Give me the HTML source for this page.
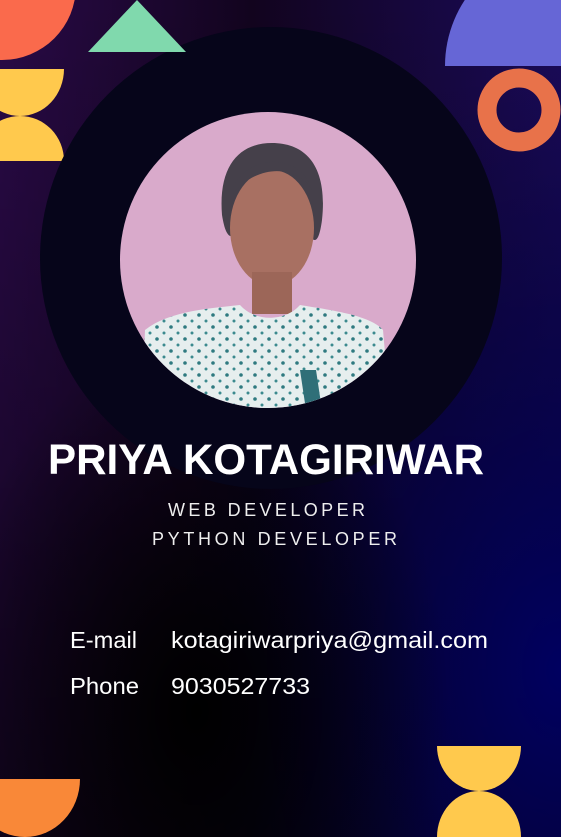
<!DOCTYPE html>
<html><head><meta charset="utf-8"><style>
html,body{margin:0;padding:0}
body{width:561px;height:837px;overflow:hidden;position:relative;font-family:"Liberation Sans",Arial,sans-serif;
background:#05001a;}
svg{position:absolute;left:0;top:0}
</style></head><body>
<svg width="561" height="837" viewBox="0 0 561 837">
<defs>
<linearGradient id="bg" x1="0" y1="0" x2="1" y2="0">
<stop offset="0" stop-color="#2a0a48"/><stop offset="0.45" stop-color="#12041e"/><stop offset="1" stop-color="#1a0a5a"/>
</linearGradient>
<linearGradient id="bg2" x1="0" y1="0" x2="0" y2="1">
<stop offset="0" stop-color="#000" stop-opacity="0"/><stop offset="0.5" stop-color="#000" stop-opacity="0.3"/><stop offset="1" stop-color="#000" stop-opacity="0.6"/>
</linearGradient>
<radialGradient id="br" cx="1" cy="0.8" r="0.7">
<stop offset="0" stop-color="#000060"/><stop offset="1" stop-color="#000040" stop-opacity="0"/>
</radialGradient>
<radialGradient id="bc" cx="0.35" cy="0.85" r="0.45">
<stop offset="0" stop-color="#000"/><stop offset="1" stop-color="#000" stop-opacity="0"/>
</radialGradient>
<clipPath id="pc"><circle cx="268" cy="260" r="148"/></clipPath>
<clipPath id="top66"><rect x="0" y="0" width="561" height="66"/></clipPath>
<pattern id="dots" width="14" height="12" patternUnits="userSpaceOnUse">
<rect width="14" height="12" fill="#e6eeee"/>
<circle cx="3" cy="3" r="1.8" fill="#2f7a80"/><circle cx="10" cy="9" r="1.5" fill="#3b8a8e"/>
</pattern>
</defs>
<rect width="561" height="837" fill="url(#bg)"/>
<rect width="561" height="837" fill="url(#bg2)"/>
<rect width="561" height="837" fill="url(#br)"/>
<rect width="561" height="837" fill="url(#bc)"/>
<circle cx="2" cy="-14" r="74" fill="#fa6a4c"/>
<path d="M-24,69 H64 A44,47 0 0 1 20,116 A44,47 0 0 1 -24,69Z" fill="#ffc94d"/>
<path d="M-24,161 H64 A44,45 0 0 0 20,116 A44,45 0 0 0 -24,161Z" fill="#ffc94d"/>
<circle cx="565" cy="66" r="120" fill="#6666d6" clip-path="url(#top66)"/>
<circle cx="519" cy="110" r="32" fill="none" stroke="#e8724a" stroke-width="19"/>
<circle cx="271" cy="258" r="231" fill="#06051a"/>
<polygon points="137,0 88,52 186,52" fill="#80d9ad"/>
<circle cx="268" cy="260" r="148" fill="#d9aacb"/>
<g clip-path="url(#pc)">
<path d="M222,215 C218,165 240,143 272,143 C305,143 328,165 322,220 C318,250 312,240 305,230 L240,230 C232,240 226,240 222,215Z" fill="#45404a"/>
<ellipse cx="272" cy="228" rx="42" ry="58" fill="#a87062"/>
<path d="M232,190 C245,155 300,150 312,190 C300,168 260,160 232,195Z" fill="#45404a"/>
<rect x="252" y="272" width="40" height="42" fill="#9c6658"/>
<path d="M142,410 L145,330 C170,310 215,308 240,305 C255,322 285,322 300,305 C330,310 370,315 383,330 L390,410Z" fill="url(#dots)"/>
<path d="M300,370 L306,410 L322,410 L316,370Z" fill="#2f6f78"/>
</g>
</svg>
<svg width="561" height="837" viewBox="0 0 561 837" style="z-index:2">
<text x="48" y="474" textLength="436" lengthAdjust="spacingAndGlyphs" font-family="Liberation Sans" font-weight="bold" font-size="43" fill="#fff">PRIYA KOTAGIRIWAR</text>
<text x="168" y="516" textLength="197" lengthAdjust="spacing" font-family="Liberation Sans" font-size="18" fill="#eee">WEB DEVELOPER</text>
<text x="152" y="545" textLength="245" lengthAdjust="spacing" font-family="Liberation Sans" font-size="18" fill="#eee">PYTHON DEVELOPER</text>
<text x="70" y="648" textLength="67" lengthAdjust="spacingAndGlyphs" font-family="Liberation Sans" font-size="23" fill="#fff">E-mail</text>
<text x="171" y="648" textLength="317" lengthAdjust="spacingAndGlyphs" font-family="Liberation Sans" font-size="23" fill="#fff">kotagiriwarpriya@gmail.com</text>
<text x="70" y="694" textLength="69" lengthAdjust="spacingAndGlyphs" font-family="Liberation Sans" font-size="23" fill="#fff">Phone</text>
<text x="171" y="694" textLength="139" lengthAdjust="spacingAndGlyphs" font-family="Liberation Sans" font-size="23" fill="#fff">9030527733</text>
<path d="M-30,779 H80 A55,58 0 0 1 -30,779Z" fill="#f98838"/>
<path d="M437,746 H521 A42,45 0 0 1 479,791 A42,45 0 0 1 437,746Z" fill="#ffc94d"/>
<path d="M437,837 H521 A42,46 0 0 0 479,791 A42,46 0 0 0 437,837Z" fill="#ffc94d"/>
</svg>
</body></html>
